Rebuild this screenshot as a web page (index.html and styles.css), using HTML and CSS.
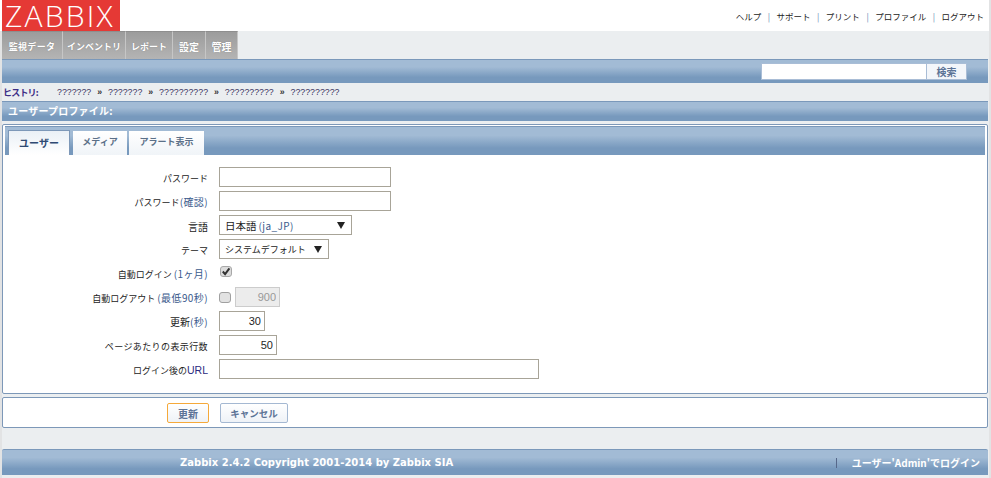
FILE: index.html
```html
<!DOCTYPE html>
<html lang="ja">
<head>
  <meta charset="UTF-8" />
  <title>ユーザープロファイル</title>
  <link rel="stylesheet" href="styles.css">
</head>
<body>
  <div class="page">
    <div class="header">
      <div class="logo">ZABBIX</div>
      <div class="top-links">
        <a>ヘルプ</a><span class="sep">|</span><a>サポート</a><span class="sep">|</span><a>プリント</a><span class="sep">|</span><a>プロファイル</a><span class="sep">|</span><a>ログアウト</a>
      </div>
    </div>
    <div class="menu">
      <a class="menu-item m1">監視データ</a>
      <a class="menu-item m2">インベントリ</a>
      <a class="menu-item m3">レポート</a>
      <a class="menu-item m4">設定</a>
      <a class="menu-item m5">管理</a>
    </div>
    <div class="bar search-bar">
      <input class="search-input" type="text" />
      <button class="search-btn">検索</button>
    </div>
    <div class="history">
      <b>ヒストリ:</b>
      <span class="crumbs">??????? <i>»</i> ??????? <i>»</i> ?????????? <i>»</i> ?????????? <i>»</i> ??????????</span>
    </div>
    <div class="bar title-bar">ユーザープロファイル:</div>

    <div class="box form-box">
      <div class="bar tabs">
        <a class="tab active">ユーザー</a>
        <a class="tab">メディア</a>
        <a class="tab">アラート表示</a>
      </div>
      <div class="form">
        <div class="row">
          <label>パスワード</label>
          <input class="field w172" type="password" />
        </div>
        <div class="row">
          <label>パスワード<em>(確認)</em></label>
          <input class="field w172" type="password" />
        </div>
        <div class="row">
          <label class="kanji">言語</label>
          <div class="select w133"><span><span class="lang">日本語</span> <em>(ja_JP)</em></span><i class="arrow"></i></div>
        </div>
        <div class="row">
          <label>テーマ</label>
          <div class="select w110"><span>システムデフォルト</span><i class="arrow"></i></div>
        </div>
        <div class="row">
          <label>自動ログイン <em>(1ヶ月)</em></label>
          <span class="check">
            <svg width="12" height="11" viewBox="0 0 12 11"><rect x=".5" y=".5" width="11" height="10" rx="2.5" fill="#dcdcdc" stroke="#a8a8a8"/><path d="M2.8 5.5l2.3 2.6L9.4 2.4" fill="none" stroke="#333" stroke-width="2"/></svg>
          </span>
        </div>
        <div class="row">
          <label>自動ログアウト <em>(最低90秒)</em></label>
          <span class="check off">
            <svg width="12" height="11" viewBox="0 0 12 11"><rect x=".5" y=".5" width="11" height="10" rx="2.5" fill="#e2e2e2" stroke="#a0a0a0"/></svg>
          </span>
          <input class="field num disabled w45" type="text" value="900" disabled />
        </div>
        <div class="row">
          <label><span class="kanji">更新</span><em>(秒)</em></label>
          <input class="field num w46" type="text" value="30" />
        </div>
        <div class="row">
          <label class="wide">ページあたりの表示行数</label>
          <input class="field num w58" type="text" value="50" />
        </div>
        <div class="row">
          <label>ログイン後の<em class="dark">URL</em></label>
          <input class="field w320" type="text" />
        </div>
      </div>
    </div>

    <div class="box actions">
      <button class="btn primary">更新</button>
      <button class="btn cancel">キャンセル</button>
    </div>

    <div class="bar footer">
      <span class="copyright">Zabbix 2.4.2 Copyright 2001-2014 by Zabbix SIA</span>
      <span class="login-as"><i class="foot-sep"></i>ユーザー'Admin'でログイン</span>
    </div>
  </div>
</body>
</html>
```

FILE: styles.css
```css
html, body {
  margin: 0;
  padding: 0;
  background: #e2e3e4;
}
body {
  font-family: "Noto Sans CJK JP", "Liberation Sans", sans-serif;
  font-size: 9px;
  color: #1a1a1a;
  height: 478px;
  overflow: hidden;
}
.page {
  margin: 0 2px;
  padding-right: 1px;
  height: 478px;
  background: #ebeef0;
}
.header {
  height: 31px;
  margin: 0 -1px 0 -2px;
  padding-left: 2px;
  background: #fff;
  display: flex;
  justify-content: space-between;
}
.logo {
  width: 118px;
  height: 31px;
  background: #e53935;
  color: #fff;
  font-family: "Open Sans", "Liberation Sans", sans-serif;
  font-weight: 300;
  font-size: 30px;
  line-height: 31px;
  letter-spacing: 2.2px;
  padding-left: 3px;
  box-sizing: border-box;
  white-space: nowrap;
}
.top-links {
  display: flex;
  align-items: center;
  height: 31px;
  padding-right: 5px;
  font-size: 8.5px;
  color: #222;
}
.sep {
  margin: 0 6.5px;
  color: #5a7fb0;
}
.menu {
  height: 28px;
  display: flex;
}
.menu-item {
  height: 28px;
  line-height: 29px;
  box-sizing: border-box;
  border-top: 1px solid #8e8e8e;
  border-right: 1px solid #c6c6c6;
  background: linear-gradient(#9c9c9c, #b4b4b4);
  color: #fff;
  font-weight: 700;
  text-align: center;
  text-shadow: 0 0 1px #777;
}
.m1 { width: 61px; letter-spacing: 0.3px; }
.m2 { width: 63px; }
.m3 { width: 47px; }
.m4 { width: 33px; font-size: 10px; }
.m5 { width: 32px; font-size: 10px; }
.bar {
  box-sizing: border-box;
  border-top: 1px solid #7a98ba;
  background: linear-gradient(#a2bbd5 0%, #a2bbd5 30%, #7799bd 75%, #7799bd 100%);
}
.search-bar {
  height: 24px;
  display: flex;
  align-items: center;
  justify-content: flex-end;
  padding-right: 21px;
  padding-bottom: 1px;
}
.search-input {
  width: 165px;
  height: 17px;
  box-sizing: border-box;
  border: 1px solid #a9bdd6;
  border-right: 0;
  background: #fff;
  padding: 0;
  margin: 0;
}
.search-btn {
  width: 41px;
  height: 17px;
  padding: 0;
  border: 1px solid #a9bdd6;
  background: #f3f6fa;
  color: #5c7396;
  font: 700 10px "Noto Sans CJK JP", sans-serif;
}
.history {
  height: 18px;
  line-height: 19px;
  display: flex;
  padding-left: 1px;
  color: #3d2f86;
}
.history b {
  width: 54px;
  letter-spacing: -0.8px;
}
.crumbs {
  font-family: "Liberation Sans", sans-serif;
  font-size: 8.8px;
  color: #3a3560;
}
.crumbs i {
  font-style: normal;
  font-weight: 700;
  color: #333;
  margin: 0 3.5px;
}
.title-bar {
  height: 20px;
  line-height: 18px;
  padding-left: 6px;
  color: #fff;
  font-weight: 700;
  font-size: 10px;
  letter-spacing: 0.2px;
}
.box {
  box-sizing: border-box;
  background: #fff;
  border: 1px solid #7d98b8;
  border-radius: 2px;
}
.form-box {
  margin-top: 3px;
  height: 270px;
  padding: 1px 2px;
}
.tabs {
  height: 29px;
  display: flex;
  align-items: flex-end;
  padding-left: 3px;
  gap: 3px;
}
.tab {
  height: 24px;
  line-height: 22px;
  box-sizing: border-box;
  background: linear-gradient(#fff, #f0f4f8);
  color: #5b7088;
  font-weight: 700;
  text-align: center;
  width: 54px;
}
.tab:nth-child(3) {
  width: 75px;
  margin-left: -1px;
}
.tab.active {
  width: 62px;
  height: 25px;
  line-height: 24px;
  font-size: 10px;
  color: #2f4a73;
  border: 1px solid #7d98b8;
  border-bottom: 0;
  background: linear-gradient(#eaf0f6, #fff);
}
.form {
  padding-top: 10px;
}
.row {
  height: 24px;
  display: flex;
  align-items: center;
  gap: 4px;
}
.row label {
  width: 203px;
  margin-right: 7px;
  padding-top: 3px;
  text-align: right;
  color: #222;
  line-height: 20px;
}
.kanji {
  font-size: 10px;
}
.lang {
  font-size: 10.5px;
}
.row label.wide {
  letter-spacing: 0.4px;
}
.row em {
  font-style: normal;
  font-size: 10px;
  letter-spacing: 0.4px;
  color: #3b5a8c;
}
.row em.dark {
  font-family: "Liberation Sans", sans-serif;
  font-size: 10.5px;
  letter-spacing: 0;
  color: #2b2b80;
}
.field {
  height: 20px;
  box-sizing: border-box;
  padding: 0 3px;
  margin: 0;
  border: 1px solid #a8a498;
  background: #fff;
  font: 11px "Liberation Sans", sans-serif;
  color: #1f1f1f;
}
.num {
  text-align: right;
}
.disabled {
  background: #ececec;
  border-color: #ccc;
  color: #999;
}
.w172 { width: 172px; }
.w45 { width: 45px; }
.w46 { width: 46px; }
.w58 { width: 58px; }
.w320 { width: 320px; }
.select {
  height: 20px;
  box-sizing: border-box;
  border: 1px solid #a8a498;
  display: flex;
  align-items: center;
  justify-content: space-between;
  padding: 0 6px 0 5px;
  background: #fff;
  white-space: nowrap;
}
.w133 { width: 133px; }
.w110 { width: 110px; }
.arrow {
  width: 0;
  height: 0;
  border-left: 4px solid transparent;
  border-right: 4px solid transparent;
  border-top: 7px solid #222;
}
.check {
  width: 12px;
  height: 11px;
  display: block;
  margin-top: -4px;
  margin-left: 1px;
}
.check.off {
  margin: 1px 0 0;
}
.check svg {
  display: block;
}
.actions {
  margin-top: 3px;
  height: 31px;
  padding: 5px 0 0 164px;
  display: flex;
  align-items: flex-start;
  gap: 11px;
}
.btn {
  height: 20px;
  padding: 0;
  margin: 0;
  border: 1px solid #a4b8d2;
  border-radius: 2px;
  background: linear-gradient(#fff, #eef2f7);
  color: #5c7396;
  font: 700 10px "Noto Sans CJK JP", sans-serif;
}
.btn.primary {
  border-color: #f5a93a;
  width: 42px;
}
.btn.cancel {
  width: 68px;
  font-size: 9.5px;
}
.footer {
  margin-top: 21px;
  height: 26px;
  display: flex;
  align-items: center;
  color: #fff;
  font-weight: 700;
  font-size: 10px;
  padding-left: 178px;
  padding-right: 8px;
  border-radius: 2px 2px 0 0;
  justify-content: space-between;
}
.copyright {
  font-family: "DejaVu Sans", sans-serif;
  font-size: 10px;
}
.login-as {
  display: flex;
  align-items: center;
}
.foot-sep {
  width: 1px;
  height: 10px;
  background: #56688a;
  margin-right: 15px;
}
```
